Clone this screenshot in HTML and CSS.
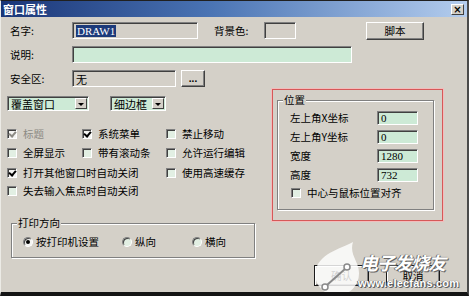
FILE: index.html
```html
<!DOCTYPE html>
<html lang="zh-CN">
<head>
	<meta charset="UTF-8">
	<title>窗口属性</title>
	<link rel="stylesheet" href="styles.css">
</head>
<body>
<div class="window">
	<div class="titlebar">
		<span class="title">窗口属性</span>
		<span class="close">×</span>
	</div>

	<div class="content">
		<div class="row">
			<span class="lbl">名字:</span>
			<div class="field name"><span class="selected">DRAW1</span></div>
			<span class="lbl bg-lbl">背景色:</span>
			<div class="field swatch"></div>
			<button class="btn script" type="button">脚本</button>
		</div>
		<div class="row">
			<span class="lbl">说明:</span>
			<div class="field desc green"></div>
		</div>
		<div class="row last">
			<span class="lbl">安全区:</span>
			<div class="field area cjk">无</div>
			<button class="btn dots" type="button">...</button>
		</div>

		<div class="main">
			<div class="left">
				<div class="selects">
					<div class="select s1"><span class="val">覆盖窗口</span><span class="arrow"></span></div>
					<div class="select s2"><span class="val">细边框</span><span class="arrow"></span></div>
				</div>

				<div class="checks">
					<label class="check disabled"><span class="box on"></span>标题</label>
					<label class="check"><span class="box on"></span>系统菜单</label>
					<label class="check"><span class="box"></span>禁止移动</label>

					<label class="check"><span class="box"></span>全屏显示</label>
					<label class="check"><span class="box"></span>带有滚动条</label>
					<label class="check"><span class="box"></span>允许运行编辑</label>

					<label class="check span2"><span class="box on"></span>打开其他窗口时自动关闭</label>
					<label class="check"><span class="box"></span>使用高速缓存</label>

					<label class="check span3"><span class="box"></span>失去输入焦点时自动关闭</label>
				</div>

				<fieldset class="group print">
					<legend>打印方向</legend>
					<div class="radios">
						<label class="opt o1"><span class="radio on"></span>按打印机设置</label>
						<label class="opt o2"><span class="radio"></span>纵向</label>
						<label class="opt"><span class="radio"></span>横向</label>
					</div>
				</fieldset>
			</div>

			<div class="right">
				<div class="highlight">
					<fieldset class="group pos">
						<legend>位置</legend>
						<div class="coord first"><span class="clbl">左上角X坐标</span><div class="field num green">0</div></div>
						<div class="coord"><span class="clbl">左上角Y坐标</span><div class="field num green">0</div></div>
						<div class="coord"><span class="clbl">宽度</span><div class="field num green">1280</div></div>
						<div class="coord"><span class="clbl">高度</span><div class="field num green">732</div></div>
						<label class="check center"><span class="box"></span>中心与鼠标位置对齐</label>
					</fieldset>
				</div>
			</div>
		</div>

		<div class="buttons">
			<button class="btn action" type="button">确认</button>
			<button class="btn action cancel" type="button">取消</button>
		</div>
	</div>

	<!-- site watermark over the corner -->
	<div class="watermark">
		<svg class="blob" width="70" height="60" viewBox="0 0 70 60">
			<path d="M44 1 C32 8 8 12 6 33 A22 22 0 1 0 50 32 C50 20 40 14 44 1 Z" fill="#ffffff" fill-opacity="0.82"/>
			<line x1="18" y1="44" x2="36" y2="28" stroke="#8a8a8a" stroke-width="2"/>
			<circle cx="16" cy="46" r="3" fill="#fff" stroke="#8a8a8a" stroke-width="1.5"/>
			<circle cx="38" cy="26" r="3" fill="#fff" stroke="#8a8a8a" stroke-width="1.5"/>
		</svg>
		<span class="wm-name">电子发烧友</span>
		<span class="wm-url">www.elecfans.com</span>
	</div>
</div>
</body>
</html>
```

FILE: styles.css
```css
* {
	box-sizing: border-box;
}

body {
	margin: 0;
	background: #d4d0c8;
	font-family: "Noto Sans CJK SC", "Noto Sans", sans-serif;
	font-size: 10.5px;
	line-height: 12px;
	color: #000;
}

.window {
	position: relative;
	width: 469px;
	height: 296px;
	background: #d4d0c8;
	border-top: 1px solid #202020;
	border-left: 1px solid #ecebe6;
	border-right: 2px solid #4a4a4a;
	border-bottom: 4px solid #141414;
	overflow: hidden;
}

/* title bar */
.titlebar {
	height: 16px;
	display: flex;
	align-items: center;
	justify-content: space-between;
	padding: 0 3px 0 2px;
	background: linear-gradient(to right, #1a3577 0%, #4a74b4 45%, #b4cdee 100%);
}

.title {
	color: #fff;
	font-weight: bold;
	font-size: 11px;
}

.close {
	width: 13px;
	height: 11px;
	background: #d4d0c8;
	border: 1px solid;
	border-color: #fff #404040 #404040 #fff;
	font: bold 10px/9px "DejaVu Sans", sans-serif;
	text-align: center;
}

/* content */
.content {
	padding: 5px 0 0 7px;
}

.row {
	display: flex;
	align-items: center;
	height: 17px;
	margin-bottom: 7px;
}

.row.last {
	margin-bottom: 0;
}

.lbl {
	width: 64px;
	padding-left: 2px;
}

.field {
	height: 17px;
	border: 1px solid;
	border-color: #808080 #fff #fff #808080;
	box-shadow: inset 1px 1px #404040;
	padding: 2px 2px 0 3px;
	font-family: "Liberation Serif", serif;
	font-size: 11px;
	line-height: 12px;
}

.green {
	background: #cdead6;
}

.name {
	width: 126px;
}

.selected {
	background: #1c3a7a;
	color: #fff;
	padding: 0 1px;
}

.bg-lbl {
	width: 50px;
	margin-left: 16px;
	padding-left: 0;
}

.swatch {
	width: 32px;
}

.desc {
	width: 280px;
}

.area {
	width: 104px;
}

.cjk {
	font-family: "Noto Sans CJK SC", sans-serif;
	font-size: 11px;
}

.btn {
	background: #d4d0c8;
	border: 1px solid;
	border-color: #fff #404040 #404040 #fff;
	box-shadow: inset -1px -1px #808080;
	font-family: "Noto Sans CJK SC", sans-serif;
	font-size: 10.5px;
	padding: 0;
	color: #000;
}

.script {
	width: 58px;
	height: 18px;
	margin-left: 70px;
}

.dots {
	width: 24px;
	height: 17px;
	margin-left: 5px;
	font-family: "Liberation Sans", sans-serif;
	font-weight: bold;
	font-size: 10px;
	line-height: 10px;
}

/* middle section */
.main {
	display: flex;
	margin-top: 2px;
}

.left {
	width: 256px;
	padding-top: 7px;
}

.selects {
	display: flex;
	gap: 21px;
	margin-left: -1px;
}

.select {
	display: flex;
	height: 15px;
	background: #cdead6;
	border: 1px solid;
	border-color: #808080 #fff #fff #808080;
	box-shadow: inset 1px 1px #404040;
}

.s1 {
	width: 82px;
}

.s2 {
	width: 56px;
}

.val {
	flex: 1;
	padding: 1px 0 0 3px;
	line-height: 12px;
	font-size: 11px;
}

.arrow {
	position: relative;
	width: 12px;
	margin: 1px 1px 1px 0;
	background: #d4d0c8;
	border: 1px solid;
	border-color: #fff #404040 #404040 #fff;
}

.arrow::after {
	content: "";
	position: absolute;
	left: 2px;
	top: 4px;
	border-left: 3px solid transparent;
	border-right: 3px solid transparent;
	border-top: 3px solid #000;
}

.checks {
	display: grid;
	grid-template-columns: 75px 84px auto;
	grid-template-rows: 17px 22px 18px 17px;
	align-items: center;
	margin-top: 14px;
	margin-left: -1px;
}

.check {
	display: flex;
	align-items: center;
	white-space: nowrap;
}

.span2 {
	grid-column: span 2;
}

.span3 {
	grid-column: span 3;
}

.disabled {
	color: #8c8a84;
}

.box {
	position: relative;
	width: 10px;
	height: 10px;
	margin-right: 6px;
	background: #e2efe3;
	border: 1px solid;
	border-color: #808080 #fff #fff #808080;
	box-shadow: inset 1px 1px #404040;
}

.box.on {
	background: #f4f4f2;
}

.box.on::after {
	content: "";
	position: absolute;
	left: 2px;
	top: 0px;
	width: 3px;
	height: 5px;
	border-right: 2px solid #000;
	border-bottom: 2px solid #000;
	transform: rotate(40deg);
}

.disabled .box.on::after {
	border-color: #8c8a84;
}

/* group boxes */
.group {
	margin: 0;
	padding: 0;
	min-width: 0;
	border: 1px solid #808080;
	box-shadow: inset 1px 1px #fff, 1px 1px #fff;
}

.group legend {
	padding: 0 1px;
	margin-left: 5px;
	line-height: 14px;
	background: #d4d0c8;
}

.print {
	width: 244px;
	margin: 17px 0 0 3px;
	padding-bottom: 8px;
}

.radios {
	display: flex;
	align-items: center;
	height: 14px;
	margin-top: 5px;
	padding-left: 11px;
}

.opt {
	display: flex;
	align-items: center;
	white-space: nowrap;
}

.o1 {
	width: 99px;
}

.o2 {
	width: 70px;
}

.radio {
	position: relative;
	width: 10px;
	height: 10px;
	margin-right: 3px;
	border-radius: 50%;
	background: #e2efe3;
	border: 1px solid;
	border-color: #808080 #fff #fff #808080;
	box-shadow: inset 1px 1px #404040;
}

.radio.on {
	background: #f4f4f2;
}

.radio.on::after {
	content: "";
	position: absolute;
	left: 2px;
	top: 2px;
	width: 4px;
	height: 4px;
	border-radius: 50%;
	background: #000;
}

/* position box, marked in red */
.right {
	margin-left: 8px;
}

.highlight {
	width: 171px;
	height: 132px;
	border: 1px solid #d65858;
	box-shadow: 0 0 0 1px #f2bcbc;
}

.pos {
	width: 157px;
	margin: 3px 0 0 4px;
	padding-bottom: 11px;
}

.coord {
	display: flex;
	align-items: center;
	height: 14px;
	margin-bottom: 5px;
	padding-left: 12px;
}

.coord.first {
	margin-top: 4px;
}

.clbl {
	width: 87px;
	white-space: nowrap;
}

.num {
	width: 41px;
	height: 14px;
	padding: 1px 2px 0 3px;
	line-height: 11px;
}

.center {
	height: 11px;
	margin-top: 3px;
	padding-left: 13px;
}

/* bottom buttons */
.buttons {
	display: flex;
	justify-content: flex-end;
	gap: 17px;
	margin-top: 7px;
	padding-right: 27px;
}

.action {
	width: 55px;
	height: 21px;
	border: 1px solid #1a1a1a;
	box-shadow: inset 1px 1px #fff, inset -1px -1px #808080;
}

.cancel {
	width: 54px;
}

/* watermark */
.watermark {
	position: absolute;
	left: 308px;
	top: 240px;
	width: 158px;
	height: 52px;
}

.blob {
	position: absolute;
	left: 0;
	top: 0;
}

.wm-name {
	position: absolute;
	left: 51px;
	top: 10px;
	font: italic bold 18px/22px "Noto Sans CJK SC", sans-serif;
	color: #fff;
	letter-spacing: -1px;
	text-shadow: 0 0 1px #555, 1px 1px 0 #666, -1px 0 0 #777;
}

.wm-url {
	position: absolute;
	left: 49px;
	top: 36px;
	font: bold 11px/13px "Liberation Sans", sans-serif;
	color: #fff;
	letter-spacing: 0.2px;
	text-shadow: 0 0 1px #555, 1px 1px 0 #666, -1px 0 0 #777;
}
```
